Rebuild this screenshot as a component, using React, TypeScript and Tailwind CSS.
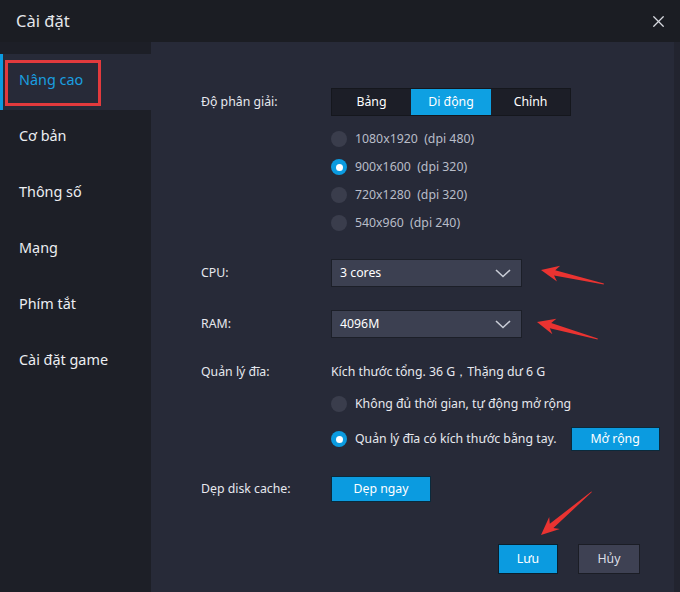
import { X } from "lucide-react";

const menu = ["Nâng cao", "Cơ bản", "Thông số", "Mạng", "Phím tắt", "Cài đặt game"];
const resolutions = [
  { text: "1080x1920  (dpi 480)", on: false },
  { text: "900x1600  (dpi 320)", on: true },
  { text: "720x1280  (dpi 320)", on: false },
  { text: "540x960  (dpi 240)", on: false },
];

const Radio = ({ on }: { on: boolean }) =>
  on ? (
    <span className="w-4 h-4 rounded-full bg-[#0b9be0] flex items-center justify-center shrink-0">
      <span className="w-[7px] h-[7px] rounded-full bg-white" />
    </span>
  ) : (
    <span className="w-4 h-4 rounded-full bg-[#3a3d4c] shrink-0" />
  );

const Select = ({ value }: { value: string }) => (
  <div className="w-[191px] h-7 bg-[#3c4051] border border-[#1c1f28] flex items-center justify-between pl-2 pr-2.5 text-white">
    <span>{value}</span>
    <svg width="16" height="9" viewBox="0 0 16 9" fill="none">
      <path d="M1 1l7 6.5L15 1" stroke="#c9ccd6" strokeWidth="1.6" />
    </svg>
  </div>
);

// red hint arrow, tip -> tail in page coords
const arrowPoints = (tx: number, ty: number, ex: number, ey: number) => {
  const L = Math.hypot(ex - tx, ey - ty);
  const a = Math.atan2(ey - ty, ex - tx);
  const pts = [
    [0, 0], [18, -8], [14, -2.6], [L, 0.6], [L, 1.4], [14, 2.8], [18, 8],
  ];
  return pts
    .map(([x, y]) => {
      const px = tx + x * Math.cos(a) - y * Math.sin(a);
      const py = ty + x * Math.sin(a) + y * Math.cos(a);
      return `${px.toFixed(1)},${py.toFixed(1)}`;
    })
    .join(" ");
};

export default function App() {
  return (
    <div
      className="relative w-[680px] h-[592px] bg-[#1b1d23] flex flex-col overflow-hidden text-[12.3px] text-[#e6e8ee]"
      style={{ fontFamily: "'Noto Sans', 'Open Sans', sans-serif" }}
    >
      {/* Header */}
      <div className="h-[42px] flex items-center justify-between pl-4 pr-3 shrink-0">
        <span className="text-[16.5px] text-[#e4e6ea]">Cài đặt</span>
        <X className="w-[19px] h-[19px] text-[#d8dae0]" strokeWidth={1.6} />
      </div>

      <div className="flex flex-1 min-h-0">
        {/* Sidebar */}
        <div className="w-[151px] bg-[#1d1f27] pt-3 shrink-0">
          {menu.map((m, i) =>
            i === 0 ? (
              <div key={m} className="relative h-14 bg-[#272a38] flex items-center pl-[19px] pb-1">
                <span className="absolute left-0 top-0 bottom-0 w-[3px] bg-[#0b9be0]" />
                <span className="absolute left-[5px] top-[6px] w-[96px] h-[46px] border-[3px] border-[#e23a3d]" />
                <span className="text-[14.4px] text-[#1a9fe0]">{m}</span>
              </div>
            ) : (
              <div key={m} className="h-14 flex items-center pl-[19px] pb-1 text-[14.4px] text-[#eceef2]">
                {m}
              </div>
            )
          )}
        </div>

        {/* Main panel */}
        <div className="flex-1 bg-[#272a38] border-r-[6px] border-[#22242f] pl-[50px] pt-[46px]">
          <div className="flex items-center">
            <span className="w-[130px]">Độ phân giải:</span>
            <div className="flex h-7 bg-[#1c1e27] border border-[#15171d]">
              <span className="w-[79px] flex items-center justify-center text-white">Bảng</span>
              <span className="w-[80px] flex items-center justify-center bg-[#0ea0e2] text-white">Di động</span>
              <span className="w-[79px] flex items-center justify-center text-white">Chỉnh</span>
            </div>
          </div>

          <div className="mt-[9px] pl-[130px]">
            {resolutions.map((r) => (
              <div key={r.text} className="h-7 flex items-center gap-2 text-[#b9bdc8] whitespace-pre">
                <Radio on={r.on} />
                <span>{r.text}</span>
              </div>
            ))}
          </div>

          <div className="mt-[22px] flex items-center">
            <span className="w-[130px]">CPU:</span>
            <Select value="3 cores" />
          </div>
          <div className="mt-[23px] flex items-center">
            <span className="w-[130px]">RAM:</span>
            <Select value="4096M" />
          </div>

          <div className="mt-6 flex items-center h-5">
            <span className="w-[130px]">Quản lý đĩa:</span>
            <span>Kích thước tổng. 36 G，Thặng dư 6 G</span>
          </div>
          <div className="pl-[130px] mt-2">
            <div className="h-7 flex items-center gap-2">
              <Radio on={false} />
              <span>Không đủ thời gian, tự động mở rộng</span>
            </div>
            <div className="h-7 mt-[7px] flex items-center gap-2">
              <Radio on={true} />
              <span>Quản lý đĩa có kích thước bằng tay.</span>
              <button className="ml-1.5 w-[89px] h-[24px] bg-[#0b9be0] border border-[#0a2a3c] text-white">
                Mở rộng
              </button>
            </div>
          </div>

          <div className="mt-[23px] flex items-center">
            <span className="w-[130px]">Dẹp disk cache:</span>
            <button className="w-[100px] h-[26px] bg-[#0b9be0] border border-[#0a2a3c] text-white">
              Dẹp ngay
            </button>
          </div>

          <div className="mt-[42px] flex gap-[20px] pl-[297px]">
            <button className="w-[60px] h-[30px] bg-[#0b9be0] border border-[#0a1f2c] text-white">Lưu</button>
            <button className="w-[62px] h-[30px] bg-[#3e4153] border border-[#1b1d25] text-[#dcdfe6]">Hủy</button>
          </div>
        </div>
      </div>

      {/* hint arrows */}
      <svg className="absolute inset-0 pointer-events-none" width="680" height="592">
        <polygon points={arrowPoints(541, 270, 604, 283)} fill="#ea3331" />
        <polygon points={arrowPoints(537, 322, 598, 338)} fill="#ea3331" />
        <polygon points={arrowPoints(541, 535, 591, 491)} fill="#ea3331" />
      </svg>
    </div>
  );
}
